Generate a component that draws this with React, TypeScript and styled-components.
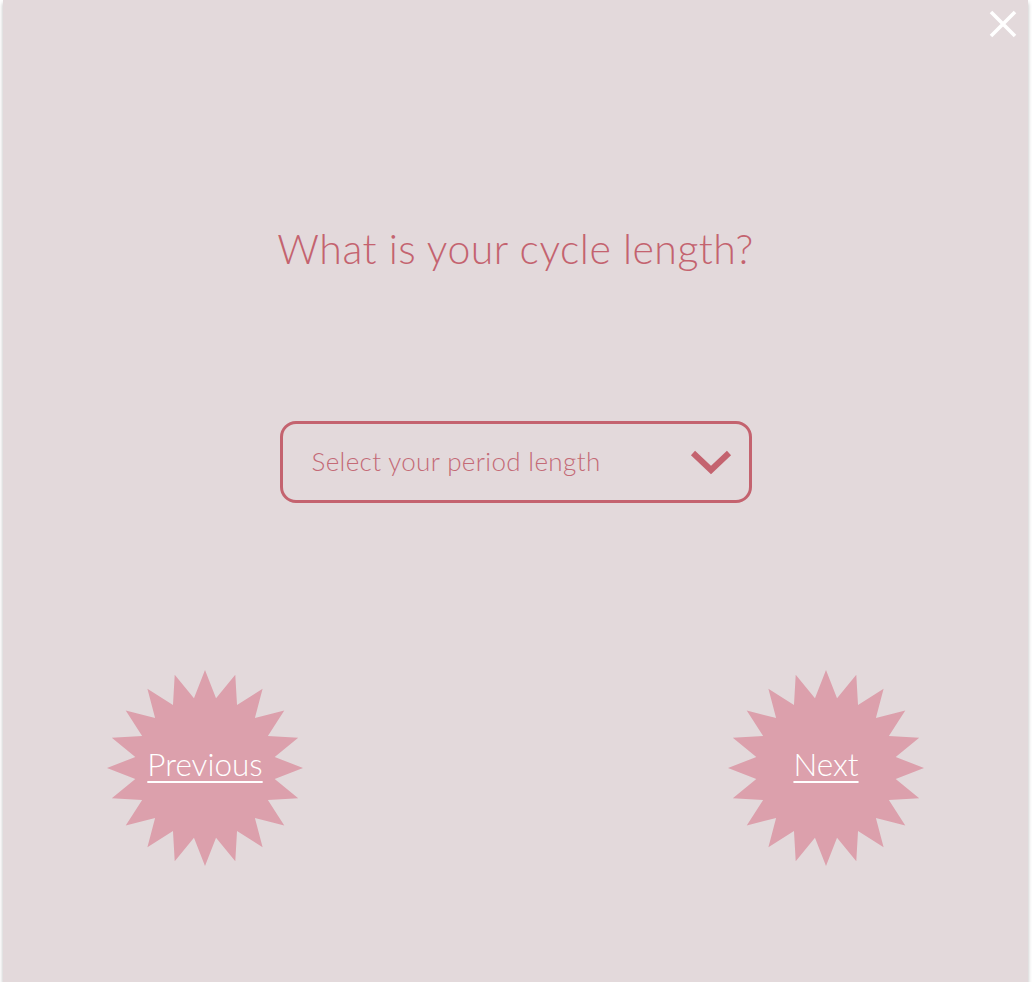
import React, { useState } from 'react';
import styled, { createGlobalStyle } from 'styled-components';

const GlobalStyle = createGlobalStyle`
  html, body {
    margin: 0;
    padding: 0;
    background: #ffffff;
  }
  body {
    font-family: Lato, 'Noto Sans', 'Liberation Sans', sans-serif;
  }
`;

const ROSE = '#c4636f';
const BURST = '#dca0ac';

// 20-point star used as the button outline
const starPolygon = (() => {
  const points: string[] = [];
  const spikes = 20;
  const inner = 36;
  for (let i = 0; i < spikes * 2; i++) {
    const r = i % 2 === 0 ? 50 : inner;
    const a = (Math.PI * i) / spikes - Math.PI / 2;
    points.push(`${(50 + r * Math.cos(a)).toFixed(2)}% ${(50 + r * Math.sin(a)).toFixed(2)}%`);
  }
  return `polygon(${points.join(', ')})`;
})();

const Card = styled.main`
  position: relative;
  box-sizing: border-box;
  width: 1025px;
  height: 982px;
  margin-left: 3px;
  background: #e3d9db;
  box-shadow: 0 3px 4px rgba(0, 0, 0, 0.28);
  display: flex;
  flex-direction: column;
  align-items: center;
  padding-top: 223px;
`;

const CloseButton = styled.button`
  position: absolute;
  top: 8px;
  right: 9px;
  width: 32px;
  height: 32px;
  padding: 0;
  border: none;
  background: none;
  cursor: pointer;
  display: flex;
  align-items: center;
  justify-content: center;
`;

const Title = styled.h1`
  margin: 0;
  font-size: 41px;
  line-height: 52px;
  font-weight: 300;
  color: ${ROSE};
  letter-spacing: 0.5px;
`;

const SelectBox = styled.div`
  box-sizing: border-box;
  margin-top: 146px;
  width: 472px;
  height: 82px;
  border: 3px solid ${ROSE};
  border-radius: 16px;
  display: flex;
  align-items: center;
  justify-content: space-between;
  padding: 0 17px 0 29px;
  cursor: pointer;
`;

const SelectLabel = styled.span`
  font-size: 26px;
  font-weight: 300;
  color: #c46a76;
  letter-spacing: 0.35px;
  padding-bottom: 2px;
`;

const NavRow = styled.nav`
  align-self: stretch;
  margin-top: 167px;
  padding: 0 104px;
  display: flex;
  justify-content: space-between;
`;

const BurstButton = styled.button`
  width: 196px;
  height: 196px;
  border: none;
  padding: 0 0 9px;
  background: ${BURST};
  clip-path: ${starPolygon};
  display: flex;
  align-items: center;
  justify-content: center;
  cursor: pointer;
  font-family: inherit;
  font-size: 31.5px;
  font-weight: 300;
  color: #ffffff;
  text-decoration: underline;
  text-decoration-thickness: 1.5px;
  text-underline-offset: 5px;
`;

const App: React.FC = () => {
  const [open, setOpen] = useState(false);

  return (
    <>
      <GlobalStyle />
      <Card>
        <CloseButton aria-label="Close">
          <svg width="30" height="30" viewBox="0 0 30 30">
            <path d="M3 3 L27 27 M27 3 L3 27" stroke="#ffffff" strokeWidth="3.6" fill="none" />
          </svg>
        </CloseButton>

        <Title>What is your cycle length?</Title>

        <SelectBox onClick={() => setOpen(!open)}>
          <SelectLabel>Select your period length</SelectLabel>
          <svg width="42" height="28" viewBox="0 0 42 28">
            <path d="M3 5 L21 22 L39 5" stroke={ROSE} strokeWidth="6" fill="none" />
          </svg>
        </SelectBox>

        <NavRow>
          <BurstButton>Previous</BurstButton>
          <BurstButton>Next</BurstButton>
        </NavRow>
      </Card>
    </>
  );
};

export default App;
